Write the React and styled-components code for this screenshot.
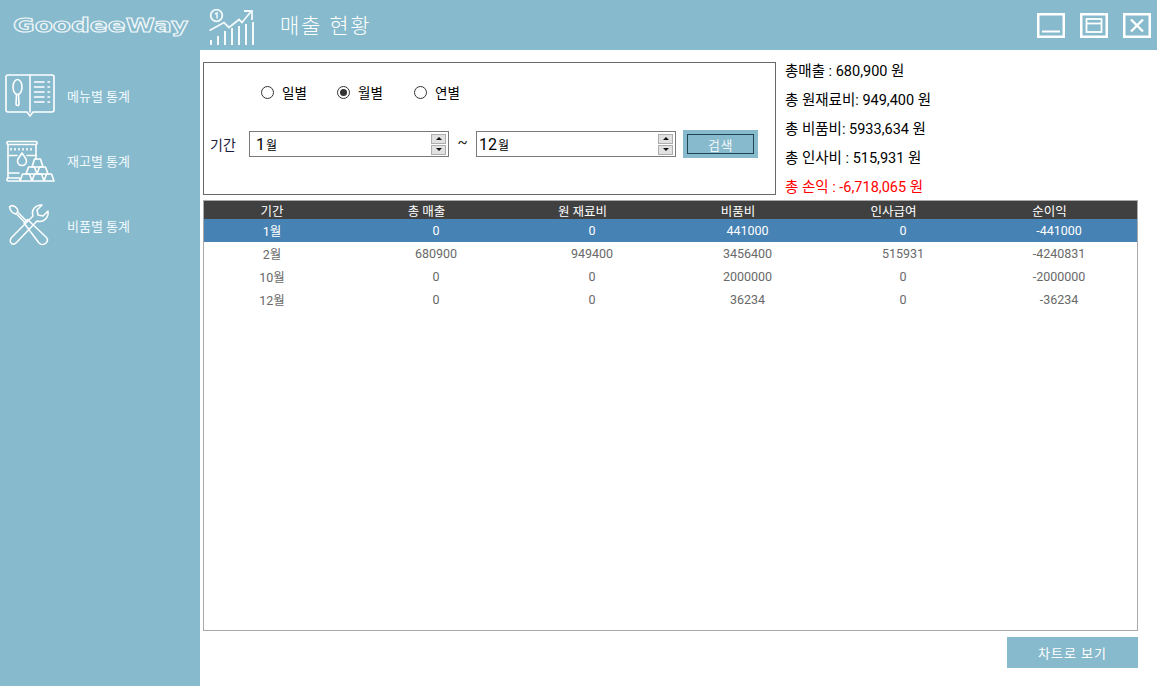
import React from 'react'
import styled, { createGlobalStyle } from 'styled-components'

const Global = createGlobalStyle`
  html, body { margin: 0; padding: 0; background: #fff; overflow: hidden; }
  body { font-family: Roboto, "Noto Sans CJK KR", sans-serif; }
`

const teal = '#87bacc'

const Page = styled.div`
  width: 1157px;
  height: 686px;
  display: grid;
  grid-template-columns: 200px 1fr;
  grid-template-rows: 50px 1fr;
`
const TopBar = styled.header`
  grid-column: 1 / 3;
  background: ${teal};
  display: flex;
  align-items: center;
  padding-left: 13px;
  padding-right: 6px;
`
const Logo = styled.div`
  width: 175px;
  margin-right: 21px;
  font-family: "DejaVu Sans", sans-serif;
  font-weight: 700;
  font-size: 19px;
  line-height: 20px;
  white-space: nowrap;
  color: transparent;
  -webkit-text-stroke: 1px #f2f8fa;
  transform-origin: left center;
  transform: scaleX(1.39);
`
const Title = styled.h1`
  margin: 0 0 2px 25px;
  font-size: 21px;
  font-weight: 300;
  letter-spacing: 1.8px;
  color: #fff;
`
const ChartMark = styled.div`
  padding-top: 4px;
  svg { display: block; }
`
const WindowButtons = styled.div`
  margin-left: auto;
  display: flex;
  gap: 15px;
`
const WindowButton = styled.button`
  width: 28px;
  height: 25px;
  padding: 0;
  border: 0;
  background: none;
  display: block;
  svg { display: block; }
`
const Sidebar = styled.nav`
  background: ${teal};
  padding-top: 13px;
`
const NavItem = styled.div`
  height: 65px;
  display: flex;
  align-items: center;
  padding-left: 5px;
  gap: 12px;
  color: #f2fbff;
  font-size: 13px;
  svg { display: block; flex: none; }
`
const Main = styled.main`
  padding: 12px 19px 0 3px;
  min-width: 0;
`
const TopRow = styled.div`
  display: flex;
  gap: 9px;
  height: 133px;
`
const FilterBox = styled.section`
  width: 573px;
  height: 133px;
  box-sizing: border-box;
  border: 1px solid #696969;
  padding: 20px 0 0 6px;
`
const RadioRow = styled.div`
  display: flex;
  padding-left: 51px;
  height: 18px;
  align-items: center;
  margin-bottom: 29px;
`
const RadioLabel = styled.label`
  display: flex;
  align-items: center;
  gap: 8px;
  width: ${p => p.$w}px;
  font-size: 13.5px;
  color: #000;
`
const RadioDot = styled.span`
  width: 13px;
  height: 13px;
  box-sizing: border-box;
  border: 1px solid #333;
  border-radius: 50%;
  background: #fff;
  display: flex;
  align-items: center;
  justify-content: center;
  &::after {
    content: '';
    display: ${p => (p.$on ? 'block' : 'none')};
    width: 7px;
    height: 7px;
    border-radius: 50%;
    background: #333;
  }
`
const FilterRow = styled.div`
  display: flex;
  align-items: center;
  height: 28px;
`
const PeriodLabel = styled.span`
  width: 39px;
  font-size: 14px;
  color: #1c1c3c;
`
const Tilde = styled.span`
  width: 27px;
  text-align: center;
  font-size: 15px;
  color: #222;
  padding-bottom: 5px;
`
const Spin = styled.div`
  width: 200px;
  height: 26px;
  box-sizing: border-box;
  border: 1px solid #7a7a7a;
  display: flex;
  align-items: center;
  padding: 0 2px 0 ${p => p.$pad}px;
  font-size: 16px;
  color: #000;
  small { font-size: 12px; margin-left: 1px; }
`
const SpinButtons = styled.div`
  margin-left: auto;
  width: 15px;
  display: flex;
  flex-direction: column;
  gap: 1px;
`
const SpinButton = styled.span`
  background: #e1e1e1;
  border: 1px solid #adadad;
  width: 13px;
  height: 8px;
  display: flex;
  align-items: center;
  justify-content: center;
  &::after {
    content: '';
    border-left: 3px solid transparent;
    border-right: 3px solid transparent;
    ${p => (p.$up ? 'border-bottom: 3px solid #111;' : 'border-top: 3px solid #111;')}
  }
`
const SearchButton = styled.button`
  margin-left: 7px;
  width: 75px;
  height: 28px;
  padding: 4px;
  border: 0;
  background: ${teal};
  display: block;
  font-family: inherit;
  span {
    display: flex;
    height: 100%;
    box-sizing: border-box;
    border: 1px solid #1d4656;
    align-items: center;
    justify-content: center;
    color: #eef6f8;
    font-size: 13px;
    letter-spacing: 0.5px;
  }
`
const Summary = styled.ul`
  list-style: none;
  margin: 0;
  padding: 0;
  font-size: 14.5px;
`
const SummaryLine = styled.li`
  height: 29px;
  line-height: 19px;
  color: ${p => (p.$loss ? '#ff0000' : '#000')};
`
const TableFrame = styled.section`
  margin-top: 5px;
  height: 431px;
  box-sizing: border-box;
  border: 1px solid #aaa;
`
const Row = styled.div`
  display: grid;
  grid-template-columns: 154px 156px 156px 155px 156px 156px;
  align-items: center;
  height: ${p => (p.$head ? 18 : 23)}px;
  font-size: 12.5px;
  background: ${p => (p.$head ? '#404040' : p.$selected ? '#4682b4' : '#fff')};
  color: ${p => (p.$head || p.$selected ? '#fff' : '#696969')};
`
const Cell = styled.div`
  text-align: center;
  padding-right: ${p => (p.$head ? 19 : 0)}px;
  &:first-child { padding-right: 18px; }
`
const Footer = styled.div`
  display: flex;
  justify-content: flex-end;
  margin-top: 6px;
`
const ChartButton = styled.button`
  width: 131px;
  height: 31px;
  border: 0;
  background: ${teal};
  color: #fff;
  font-family: inherit;
  font-size: 13px;
  letter-spacing: 1px;
`

const Stroke = ({ w, h, sw = 1.6, children }) => (
  <svg width={w} height={h} viewBox={`0 0 ${w} ${h}`} fill="none" stroke="#fff" strokeWidth={sw} strokeLinejoin="round" strokeLinecap="round">
    {children}
  </svg>
)

const ChartIcon = () => (
  <svg width="46" height="37" viewBox="0 0 46 37" fill="none" stroke="#f4fafc" strokeWidth="1.8">
    <circle cx="7.5" cy="6.5" r="5.8" />
    <path d="M6 5 L8 4 V9.5" strokeWidth="1.5" />
    <path d="M0.5 21.5 L15 13.5 L20 18.5 L30 10.5 L33 13.5 L42 2.5" />
    <path d="M35 2 H43 V11" />
    <path strokeWidth="2" d="M2 36 V31 M9 36 V27 M16 36 V22 M23 36 V19 M30 36 V17 M37 36 V15 M44 36 V13" />
  </svg>
)

const BookIcon = () => (
  <Stroke w={50} h={44}>
    <path d="M3 1 H47 A2 2 0 0 1 49 3 V36 A2 2 0 0 1 47 38 H28 L25 42 L22 38 H3 A2 2 0 0 1 1 36 V3 A2 2 0 0 1 3 1Z" />
    <path d="M25 1 V38" />
    <ellipse cx="12.5" cy="13" rx="4.5" ry="7.5" />
    <path d="M11.5 20.5 L11 30 A1.5 1.5 0 0 0 14 30 L13.5 20.5" />
    <path d="M29.5 8 H39 M29.5 13 H39 M29.5 18 H39 M29.5 23 H39 M29.5 28 H39 M43 8 H44.5 M43 13 H44.5 M43 18 H44.5 M43 23 H44.5 M43 28 H44.5" />
  </Stroke>
)

const StockIcon = () => (
  <Stroke w={50} h={42}>
    <rect x="2" y="1.5" width="30" height="3" rx="1" />
    <path d="M3 4.5 V38 M31 4.5 V19" />
    <path d="M6 8.5 V10 M10 8.5 V10 M14 8.5 V10 M18 8.5 V10 M22 8.5 V10 M26 8.5 V10" />
    <path d="M3 15.5 H12 M22 15.5 H31 M3 33 H14" />
    <path d="M17 13 C14.5 17 12.5 18.5 12.5 21 A4.5 4.5 0 0 0 21.5 21 C21.5 18.5 19.5 17 17 13Z" />
    <rect x="2" y="38" width="13" height="3" rx="1" />
    <path d="M29.5 19 H35.5 L38 27 H27Z" />
    <path d="M23.5 27 H29.5 L32 34 H21Z M34.5 27 H40.5 L43 34 H32Z" />
    <path d="M17.5 34 H24.5 L27 41 H15Z M29.5 34 H36.5 L39 41 H27Z M41.5 34 H46.5 L49 41 H39Z" />
  </Stroke>
)

const ToolsIcon = () => (
  <svg width="50" height="44" viewBox="-3 0 50 44" fill="none" stroke="#fff" strokeWidth="1.5" strokeLinejoin="round">
    <path d="M4 33 L25 12 C23 6 27 1 34 1 L29 6 L30 11 L35 12 L40 7 C41 14 35 19 29 17 L9 38 C7 40 5 41 3.5 39.5 C1.5 38 2 35 4 33Z" />
    <path d="M1.5 3 L4 1.5 C7 2 9.5 4.5 10 7.5 L7.5 10 C4.5 9 2 6 1.5 3Z" />
    <path d="M10 8.5 L18 16.5 M8.5 10 L16.5 18" />
    <path d="M16 19 L19.5 15.5 L38 33 C40 35 40 37 38 39 C36 41 33 41 31 39 Z" />
  </svg>
)

const nav = [
  { label: '메뉴별 통계', Icon: BookIcon },
  { label: '재고별 통계', Icon: StockIcon },
  { label: '비품별 통계', Icon: ToolsIcon },
]

const summary = [
  '총매출 : 680,900 원',
  '총 원재료비: 949,400 원',
  '총 비품비: 5933,634 원',
  '총 인사비 : 515,931 원',
]

const columns = ['기간', '총 매출', '원 재료비', '비품비', '인사급여', '순이익']
const rows = [
  ['1월', 0, 0, 441000, 0, -441000],
  ['2월', 680900, 949400, 3456400, 515931, -4240831],
  ['10월', 0, 0, 2000000, 0, -2000000],
  ['12월', 0, 0, 36234, 0, -36234],
]

const MonthSpin = ({ value, pad }) => (
  <Spin $pad={pad}>
    {value}<small>월</small>
    <SpinButtons>
      <SpinButton $up />
      <SpinButton />
    </SpinButtons>
  </Spin>
)

export default function App() {
  return (
    <>
      <Global />
      <Page>
        <TopBar>
          <Logo>GoodeeWay</Logo>
          <ChartMark><ChartIcon /></ChartMark>
          <Title>매출 현황</Title>
          <WindowButtons>
            <WindowButton aria-label="minimize">
              <svg width="28" height="25" viewBox="0 0 28 25" fill="none" stroke="#fff">
                <rect x="1.25" y="1.25" width="25.5" height="22.5" strokeWidth="2.5" />
                <path d="M5 18.5 H23" strokeWidth="2" />
              </svg>
            </WindowButton>
            <WindowButton aria-label="maximize">
              <svg width="28" height="25" viewBox="0 0 28 25" fill="none" stroke="#fff">
                <rect x="1.25" y="1.25" width="25.5" height="22.5" strokeWidth="2.5" />
                <rect x="6.5" y="6" width="15" height="13" strokeWidth="1.8" />
                <path d="M6.5 10.5 H21.5" strokeWidth="1.8" />
              </svg>
            </WindowButton>
            <WindowButton aria-label="close">
              <svg width="28" height="25" viewBox="0 0 28 25" fill="none" stroke="#fff">
                <rect x="1.25" y="1.25" width="25.5" height="22.5" strokeWidth="2.5" />
                <path d="M8 6.5 L20 18.5 M20 6.5 L8 18.5" strokeWidth="2.4" />
              </svg>
            </WindowButton>
          </WindowButtons>
        </TopBar>
        <Sidebar>
          {nav.map(({ label, Icon }) => (
            <NavItem key={label}>
              <Icon />
              {label}
            </NavItem>
          ))}
        </Sidebar>
        <Main>
          <TopRow>
            <FilterBox>
              <RadioRow>
                <RadioLabel $w={76}><RadioDot />일별</RadioLabel>
                <RadioLabel $w={77}><RadioDot $on />월별</RadioLabel>
                <RadioLabel $w={60}><RadioDot />연별</RadioLabel>
              </RadioRow>
              <FilterRow>
                <PeriodLabel>기간</PeriodLabel>
                <MonthSpin value="1" pad={6} />
                <Tilde>~</Tilde>
                <MonthSpin value="12" pad={2} />
                <SearchButton><span>검색</span></SearchButton>
              </FilterRow>
            </FilterBox>
            <Summary>
              {summary.map(line => <SummaryLine key={line}>{line}</SummaryLine>)}
              <SummaryLine $loss>총 손익 : -6,718,065 원</SummaryLine>
            </Summary>
          </TopRow>
          <TableFrame>
            <Row $head>
              {columns.map(c => <Cell key={c} $head>{c}</Cell>)}
            </Row>
            {rows.map((r, i) => (
              <Row key={r[0]} $selected={i === 0}>
                {r.map((v, j) => <Cell key={j}>{v}</Cell>)}
              </Row>
            ))}
          </TableFrame>
          <Footer>
            <ChartButton>차트로 보기</ChartButton>
          </Footer>
        </Main>
      </Page>
    </>
  )
}
